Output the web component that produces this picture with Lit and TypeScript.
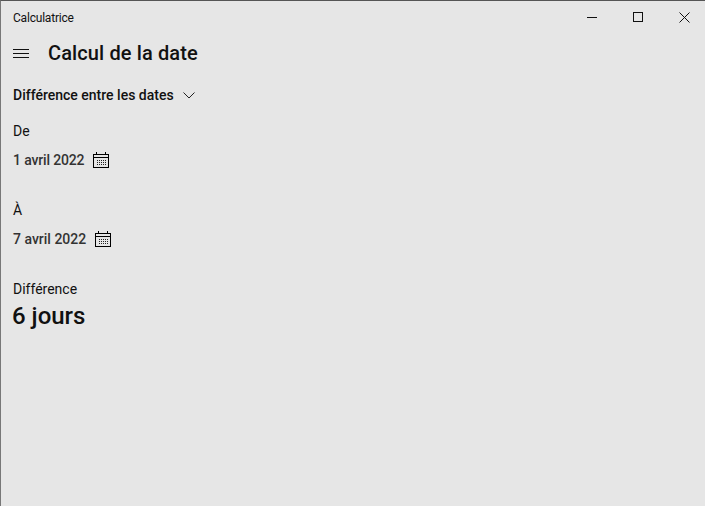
import { LitElement, html, css } from "lit";
import { customElement } from "lit/decorators.js";

const calendar = html`<svg width="16" height="16" viewBox="0 0 16 16" fill="none" stroke="#000">
  <rect x="0.5" y="2.5" width="15" height="13"></rect>
  <path d="M0.5 5.5H15.5M3.5 0V3M12.5 0V3"></path>
  <path stroke-dasharray="1 1" stroke="#222" d="M4 8.5H13M4 10.5H13M4 12.5H13"></path>
</svg>`;

@customElement("app-root")
export class AppRoot extends LitElement {
  static styles = css`
    :host {
      display: block;
      width: 705px;
      height: 506px;
      box-sizing: border-box;
      background: #e6e6e6;
      border-top: 1px solid #555;
      border-left: 1px solid #777;
      font-family: Roboto, "Open Sans", sans-serif;
      color: #111;
      overflow: hidden;
    }

    .titlebar {
      display: flex;
      align-items: center;
      justify-content: space-between;
      height: 32px;
      padding-left: 12px;
      font-size: 12px;
    }

    .app-name {
      padding-top: 2px;
      letter-spacing: -0.2px;
    }

    .controls {
      display: flex;
      margin-right: -2px;
    }

    .controls button {
      display: flex;
      align-items: center;
      justify-content: center;
      width: 46px;
      height: 32px;
      padding: 0;
      border: 0;
      background: none;
    }

    .header {
      display: flex;
      align-items: center;
      height: 40px;
      padding-left: 12px;
    }

    .menu {
      margin-right: 19px;
    }

    h1 {
      margin: 0;
      font-size: 20px;
      font-weight: 500;
      line-height: 28px;
      letter-spacing: 0.12px;
    }

    .mode {
      display: flex;
      align-items: center;
      gap: 9px;
      height: 22px;
      margin-top: 11px;
      padding-left: 12px;
      font-size: 14px;
      font-weight: 500;
    }

    .field {
      padding-left: 12px;
      margin-top: 15px;
    }

    .field + .field {
      margin-top: 30px;
    }

    .label {
      height: 20px;
      line-height: 20px;
      font-size: 14px;
    }

    .date {
      display: flex;
      align-items: center;
      gap: 9px;
      height: 20px;
      margin-top: 9px;
      font-size: 14px;
      font-weight: 500;
      color: #333;
    }

    .date.tight {
      letter-spacing: -0.15px;
    }

    .result {
      padding-left: 12px;
      margin-top: 30px;
    }

    .value {
      margin: 1px 0 0 -1px;
      font-size: 24px;
      font-weight: 500;
      line-height: 32px;
    }
  `;

  render() {
    return html`
      <div class="titlebar">
        <span class="app-name">Calculatrice</span>
        <div class="controls">
          <button aria-label="Réduire">
            <svg width="10" height="10" fill="none" stroke="#111"><path d="M0 5.5H10"></path></svg>
          </button>
          <button aria-label="Agrandir">
            <svg width="10" height="10" fill="none" stroke="#111"><rect x="0.5" y="0.5" width="9" height="9"></rect></svg>
          </button>
          <button aria-label="Fermer">
            <svg width="11" height="11" fill="none" stroke="#111"><path d="M0.5 0.5L10.5 10.5M10.5 0.5L0.5 10.5"></path></svg>
          </button>
        </div>
      </div>

      <div class="header">
        <svg class="menu" width="16" height="9" fill="none" stroke="#111"><path d="M0 0.5H16M0 4.5H16M0 8.5H16"></path></svg>
        <h1>Calcul de la date</h1>
      </div>

      <div class="mode">
        <span>Différence entre les dates</span>
        <svg width="12" height="7" fill="none" stroke="#222"><path d="M0.5 0.5L6 6L11.5 0.5"></path></svg>
      </div>

      <div class="field">
        <div class="label">De</div>
        <div class="date tight"><span>1 avril 2022</span>${calendar}</div>
      </div>

      <div class="field">
        <div class="label">À</div>
        <div class="date"><span>7 avril 2022</span>${calendar}</div>
      </div>

      <div class="result">
        <div class="label">Différence</div>
        <div class="value">6 jours</div>
      </div>
    `;
  }
}
